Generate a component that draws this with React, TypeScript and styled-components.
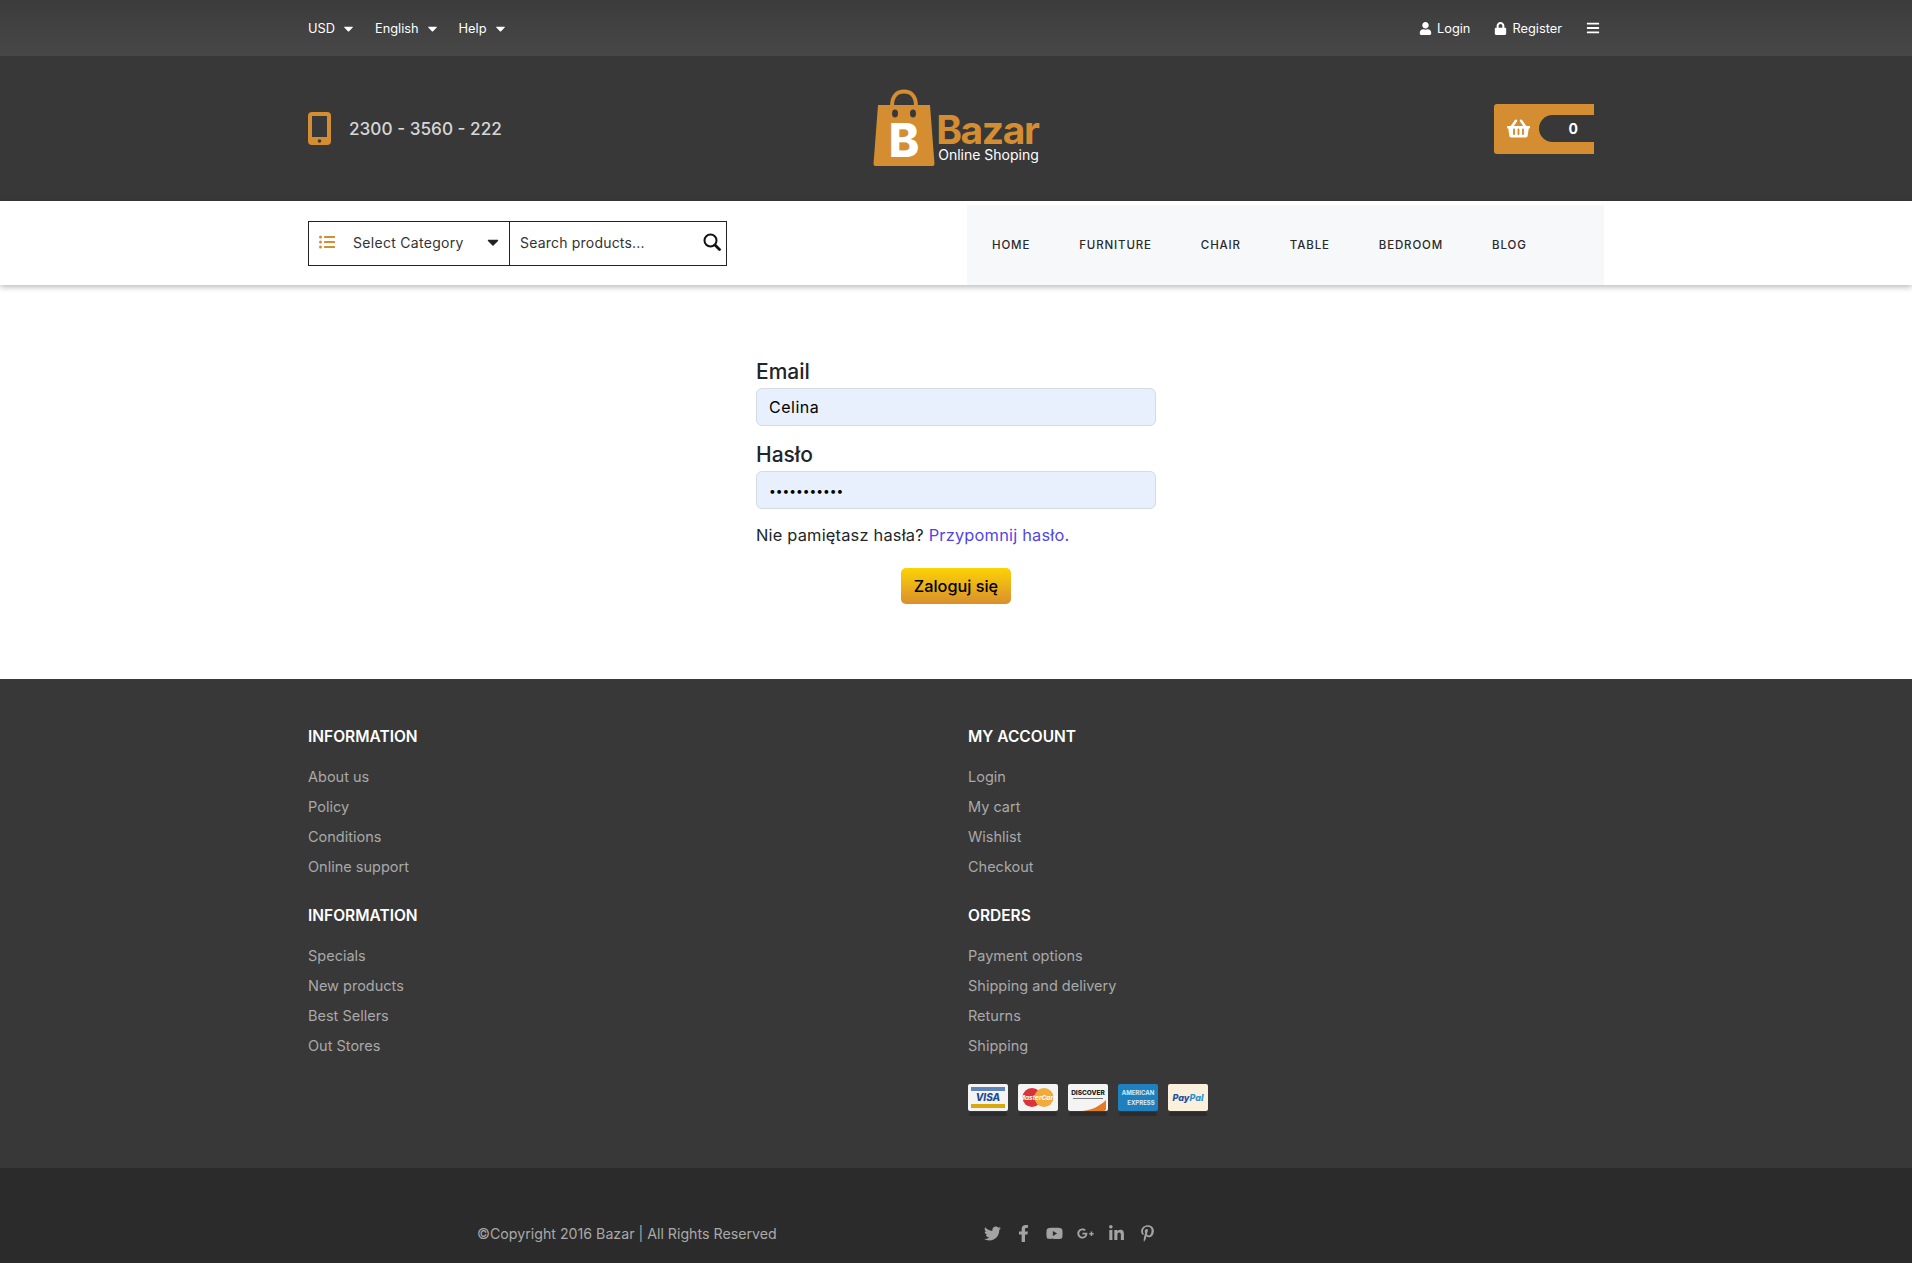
import { createGlobalStyle, styled } from "styled-components";
import {
  FaBars,
  FaCaretDown,
  FaFacebookF,
  FaGooglePlusG,
  FaLinkedinIn,
  FaListUl,
  FaLock,
  FaPinterestP,
  FaShoppingBasket,
  FaTwitter,
  FaUser,
  FaYoutube
} from "react-icons/fa";

const FONT = `Inter, "Noto Sans", "Liberation Sans", sans-serif`;
const ORANGE = "#d58d32";

const GlobalStyle = createGlobalStyle`
  * { box-sizing: border-box; }
  html, body { margin: 0; padding: 0; background: #fff; }
  body { font-family: ${FONT}; color: #212529; }
  a { text-decoration: none; color: inherit; }
`;

const Container = styled.div`
  width: 1296px;
  margin: 0 auto;
`;

const TopBar = styled.div`
  height: 56px;
  background: linear-gradient(180deg, #3c3c3c, #474747);
  color: #fff;
`;

const TopRow = styled(Container)`
  height: 100%;
  padding-right: 4px;
  display: flex;
  align-items: center;
  justify-content: space-between;
`;

const TopGroup = styled.div`
  display: flex;
  align-items: center;
`;

const TopItem = styled.a<{ $gap: number }>`
  display: flex;
  align-items: center;
  font-size: 12.8px;
  margin-right: ${(p) => p.$gap}px;
`;

const Caret = styled(FaCaretDown)`
  margin-left: 6px;
  font-size: 15px;
`;

const TopIcon = styled.span`
  display: inline-flex;
  margin-right: 5px;
  font-size: 13px;
`;

const BarsIcon = styled(FaBars)`
  font-size: 14px;
`;

const Header = styled.div`
  height: 145px;
  background: #383838;
`;

const HeaderRow = styled(Container)`
  height: 100%;
  display: grid;
  grid-template-columns: 1fr 1fr 1fr;
  align-items: center;
`;

const Phone = styled.div`
  display: flex;
  align-items: center;
  gap: 18px;
  color: #d6d6d6;
  font-size: 17.2px;
  font-weight: 500;
`;

const Logo = styled.a`
  display: flex;
  justify-content: center;
  align-items: flex-end;
  margin-top: -2px;
`;

const LogoText = styled.div`
  display: flex;
  flex-direction: column;
  margin-left: 3px;
`;

const LogoName = styled.span`
  color: ${ORANGE};
  font-size: 39px;
  font-weight: 700;
  line-height: 34px;
  letter-spacing: -1.4px;
  margin-left: -2px;
`;

const LogoTag = styled.span`
  color: #fff;
  font-size: 14px;
  line-height: 15px;
  margin-bottom: 5px;
`;

const Cart = styled.a`
  justify-self: end;
  width: 100px;
  height: 50px;
  margin-right: 10px;
  padding-left: 13px;
  display: flex;
  align-items: center;
  background: ${ORANGE};
  border-radius: 3px 0 0 3px;
  color: #fff;
  svg {
    font-size: 23px;
  }
`;

const CartCount = styled.span`
  margin-left: 9px;
  flex: 1;
  height: 27px;
  background: #383838;
  border-radius: 14px 0 0 14px;
  font-size: 14px;
  font-weight: 700;
  line-height: 27px;
  text-align: right;
  padding-right: 16px;
`;

const NavBar = styled.div`
  height: 84px;
  background: #fff;
  box-shadow: 0 2px 6px rgba(0, 0, 0, 0.28);
  position: relative;
`;

const NavRow = styled(Container)`
  height: 100%;
  display: grid;
  grid-template-columns: 659px 637px;
`;

const SearchCell = styled.div`
  display: flex;
  align-items: center;
`;

const SearchBox = styled.div`
  width: 419px;
  height: 45px;
  display: flex;
  border: 1px solid #222;
  font-size: 14px;
  letter-spacing: 0.3px;
  color: #333;
`;

const CategorySelect = styled.div`
  width: 201px;
  display: flex;
  align-items: center;
  padding: 0 7px 2px 10px;
  border-right: 1px solid #222;
  > svg:first-child {
    color: ${ORANGE};
    font-size: 16px;
    margin-right: 18px;
  }
  > svg:last-child {
    color: #222;
    font-size: 18px;
    margin-left: auto;
  }
`;

const SearchInput = styled.input`
  flex: 1;
  min-width: 0;
  border: 0;
  outline: 0;
  padding: 0 0 2px 10px;
  background: transparent;
  font: 14px ${FONT};
  letter-spacing: 0.2px;
  color: #333;
  &::placeholder {
    color: #333;
    opacity: 1;
  }
`;

const SearchButton = styled.button`
  width: 28px;
  border: 0;
  padding: 0 0 3px;
  background: transparent;
  color: #111;
  display: flex;
  align-items: center;
  justify-content: center;
`;

const Menu = styled.nav`
  margin-top: 4px;
  background: #f7f8fa;
  padding-left: 25px;
  display: flex;
  align-items: center;
  gap: 49px;
`;

const MenuLink = styled.a`
  font-size: 11.5px;
  font-weight: 500;
  letter-spacing: 0.85px;
  color: #2a2a2a;
  text-transform: uppercase;
`;

const Main = styled.main`
  height: 394px;
  padding-top: 72px;
`;

const LoginForm = styled.form`
  width: 400px;
  margin: 0 auto;
`;

const Label = styled.label`
  display: block;
  font-size: 21px;
  font-weight: 500;
  line-height: 30px;
  margin-bottom: 1px;
`;

const Field = styled.input<{ $secret?: boolean }>`
  display: block;
  width: 100%;
  height: 38px;
  margin-bottom: 14px;
  padding: 0 12px;
  background: #e8f0fe;
  border: 1px solid #d5dbe3;
  border-radius: 6px;
  outline: 0;
  font: ${(p) => (p.$secret ? "12px" : "16px")} ${FONT};
  letter-spacing: ${(p) => (p.$secret ? "0" : "0.5px")};
  color: #000;
`;

const Hint = styled.p`
  margin: 14px 0 0;
  font-size: 16.4px;
  letter-spacing: 0.2px;
  line-height: 24px;
  color: #212529;
`;

const HintLink = styled.a`
  color: #4f46e5;
`;

const SubmitRow = styled.div`
  display: flex;
  justify-content: center;
  margin-top: 21px;
`;

const Submit = styled.button`
  width: 110px;
  height: 36px;
  border: 0;
  border-radius: 5px;
  background: linear-gradient(180deg, #fcd305, #d98f2e);
  font: 500 16.3px ${FONT};
  color: #000;
  padding: 0;
`;

const Footer = styled.footer`
  height: 489px;
  background: #383838;
  padding-top: 44px;
`;

const FooterGrid = styled(Container)`
  display: grid;
  grid-template-columns: 660px 636px;
`;

const FooterTitle = styled.h4`
  margin: 0 0 11px;
  font-size: 15.5px;
  font-weight: 600;
  line-height: 28px;
  color: #fff;
  text-transform: uppercase;
`;

const FooterList = styled.ul`
  list-style: none;
  margin: 0 0 20px;
  padding: 0;
`;

const FooterItem = styled.li`
  height: 30px;
  font-size: 14.5px;
  line-height: 30px;
  color: #a9a9a9;
`;

const PayRow = styled.div`
  display: flex;
  gap: 10px;
  margin-top: 23px;
`;

const PayCard = styled.svg`
  display: block;
  width: 40px;
  height: 32px;
`;

const BottomBar = styled.div`
  height: 95px;
  background: #2b2b2b;
`;

const BottomRow = styled(Container)`
  height: 100%;
  display: flex;
  align-items: center;
  padding: 36px 0 0 169px;
`;

const Copyright = styled.p`
  margin: 0;
  width: 507px;
  font-size: 14.2px;
  color: #a9a9a9;
`;

const Socials = styled.div`
  display: flex;
  align-items: center;
  gap: 14px;
  color: #a3a3a3;
  font-size: 17px;
`;

const footerColumns = [
  [
    { title: "Information", links: ["About us", "Policy", "Conditions", "Online support"] },
    { title: "Information", links: ["Specials", "New products", "Best Sellers", "Out Stores"] }
  ],
  [
    { title: "My account", links: ["Login", "My cart", "Wishlist", "Checkout"] },
    { title: "Orders", links: ["Payment options", "Shipping and delivery", "Returns", "Shipping"] }
  ]
];

const menuItems = ["Home", "Furniture", "Chair", "Table", "Bedroom", "Blog"];

const PhoneIcon = () => (
  <svg width="23" height="33" viewBox="0 0 23 33">
    <rect width="23" height="33" rx="4" fill={ORANGE} />
    <rect x="4" y="4" width="15" height="21" fill="#383838" />
    <circle cx="11.5" cy="29" r="1.8" fill="#383838" />
  </svg>
);

const SearchIcon = () => (
  <svg width="18" height="18" viewBox="0 0 18 18">
    <circle cx="7.5" cy="7.5" r="6" fill="none" stroke="currentColor" strokeWidth="2" />
    <path d="M12 12L16.5 16.5" stroke="currentColor" strokeWidth="2.8" strokeLinecap="round" />
  </svg>
);

const BagLogo = () => (
  <svg width="62" height="78" viewBox="0 0 62 78">
    <path d="M19 17C19 7 24 2.5 31 2.5S43 7 43 17" fill="none" stroke={ORANGE} strokeWidth="4" />
    <path d="M5 16H57L61.5 75a2 2 0 0 1-2 2H2.5a2 2 0 0 1-2-2Z" fill={ORANGE} />
    <ellipse cx="22" cy="24.5" rx="3" ry="4" fill="#383838" />
    <ellipse cx="40" cy="24.5" rx="3" ry="4" fill="#383838" />
    <text x="31" y="68" textAnchor="middle" fontFamily={FONT} fontSize="46" fontWeight="800" fill="#fff">
      B
    </text>
  </svg>
);

const CardBase = ({ fill = "#f4f4f4", children }: { fill?: string; children?: React.ReactNode }) => (
  <PayCard viewBox="0 0 40 32">
    <rect x="1" y="28" width="38" height="4" rx="2" fill="#2c2c2c" />
    <rect width="40" height="27" rx="2" fill={fill} />
    {children}
  </PayCard>
);

const smallText = { fontFamily: FONT, textAnchor: "middle" } as const;

const PayCards = () => (
  <PayRow>
    <CardBase>
      <rect x="3" y="3" width="34" height="4" fill="#5f84bd" />
      <rect x="3" y="20" width="34" height="4" fill="#d9a80f" />
      <text x="20" y="17" fontSize="10" fontWeight="800" fontStyle="italic" fill="#1f4a94" {...smallText}>
        VISA
      </text>
    </CardBase>
    <CardBase>
      <circle cx="14" cy="13.5" r="9.5" fill="#d8343a" />
      <circle cx="26" cy="13.5" r="9.5" fill="#f1ab3a" />
      <text x="20" y="16" fontSize="6.5" fontWeight="700" fontStyle="italic" fill="#fff" {...smallText}>
        MasterCard
      </text>
    </CardBase>
    <CardBase>
      <path d="M38 16V25a2 2 0 0 1-2 2H14C24 26 32 22 38 16Z" fill="#e27a26" />
      <text x="20" y="11" fontSize="6.5" fontWeight="800" fill="#222" {...smallText}>
        DISCOVER
      </text>
      <rect x="5" y="14" width="30" height="1" fill="#777" />
    </CardBase>
    <CardBase fill="#1f80bd">
      <text x="20" y="11" fontSize="6" fontWeight="700" fill="#d5ecf8" {...smallText}>
        AMERICAN
      </text>
      <text x="23" y="21" fontSize="6" fontWeight="700" fill="#d5ecf8" {...smallText}>
        EXPRESS
      </text>
    </CardBase>
    <CardBase fill="#fbf0dc">
      <text x="20" y="17" fontSize="9" fontWeight="800" fontStyle="italic" fill="#1e4f9c" {...smallText}>
        Pay<tspan fill="#2b8fd0">Pal</tspan>
      </text>
    </CardBase>
  </PayRow>
);

export default function App() {
  return (
    <>
      <GlobalStyle />
      <TopBar>
        <TopRow>
          <TopGroup>
            <TopItem $gap={19}>USD<Caret /></TopItem>
            <TopItem $gap={19}>English<Caret /></TopItem>
            <TopItem $gap={0}>Help<Caret /></TopItem>
          </TopGroup>
          <TopGroup>
            <TopItem $gap={24}><TopIcon><FaUser /></TopIcon>Login</TopItem>
            <TopItem $gap={24}><TopIcon><FaLock /></TopIcon>Register</TopItem>
            <TopItem $gap={0}><BarsIcon /></TopItem>
          </TopGroup>
        </TopRow>
      </TopBar>
      <Header>
        <HeaderRow>
          <Phone><PhoneIcon />2300 - 3560 - 222</Phone>
          <Logo>
            <BagLogo />
            <LogoText>
              <LogoName>Bazar</LogoName>
              <LogoTag>Online Shoping</LogoTag>
            </LogoText>
          </Logo>
          <Cart>
            <FaShoppingBasket />
            <CartCount>0</CartCount>
          </Cart>
        </HeaderRow>
      </Header>
      <NavBar>
        <NavRow>
          <SearchCell>
            <SearchBox>
              <CategorySelect>
                <FaListUl />
                Select Category
                <FaCaretDown />
              </CategorySelect>
              <SearchInput placeholder="Search products..." />
              <SearchButton><SearchIcon /></SearchButton>
            </SearchBox>
          </SearchCell>
          <Menu>
            {menuItems.map((item) => (
              <MenuLink key={item}>{item}</MenuLink>
            ))}
          </Menu>
        </NavRow>
      </NavBar>
      <Main>
        <LoginForm>
          <Label>Email</Label>
          <Field defaultValue="Celina" />
          <Label>Hasło</Label>
          <Field $secret type="password" defaultValue="12345678901" />
          <Hint>
            Nie pamiętasz hasła? <HintLink>Przypomnij hasło.</HintLink>
          </Hint>
          <SubmitRow>
            <Submit type="button">Zaloguj się</Submit>
          </SubmitRow>
        </LoginForm>
      </Main>
      <Footer>
        <FooterGrid>
          {footerColumns.map((column, i) => (
            <div key={i}>
              {column.map((block) => (
                <div key={block.title}>
                  <FooterTitle>{block.title}</FooterTitle>
                  <FooterList>
                    {block.links.map((link) => (
                      <FooterItem key={link}>{link}</FooterItem>
                    ))}
                  </FooterList>
                </div>
              ))}
              {i === 1 && <PayCards />}
            </div>
          ))}
        </FooterGrid>
      </Footer>
      <BottomBar>
        <BottomRow>
          <Copyright>©Copyright 2016 Bazar | All Rights Reserved</Copyright>
          <Socials>
            <FaTwitter />
            <FaFacebookF />
            <FaYoutube />
            <FaGooglePlusG />
            <FaLinkedinIn />
            <FaPinterestP />
          </Socials>
        </BottomRow>
      </BottomBar>
    </>
  );
}
